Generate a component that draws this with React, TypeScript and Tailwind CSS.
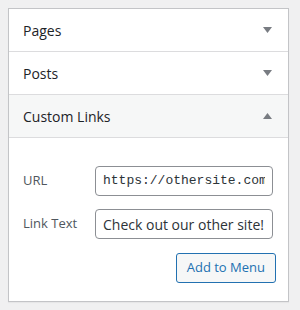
import React from "react";

const font = { fontFamily: '"Open Sans", "Noto Sans", sans-serif' };

function Arrow({ up = false }: { up?: boolean }) {
  return (
    <svg width="9" height="6" viewBox="0 0 9 6" className="block">
      {up ? (
        <polygon points="0,6 9,6 4.5,0" fill="#787c82" />
      ) : (
        <polygon points="0,0 9,0 4.5,6" fill="#787c82" />
      )}
    </svg>
  );
}

function Section({ title, open = false }: { title: string; open?: boolean }) {
  return (
    <div
      className={`h-[43px] flex items-center justify-between pl-[14px] pr-[16px] border-b border-[#dcdcde] ${
        open ? "bg-[#f6f7f7]" : "bg-white"
      }`}
    >
      <span className="text-[14px] text-[#1d2327]">{title}</span>
      <Arrow up={open} />
    </div>
  );
}

export default function App() {
  return (
    <div className="w-[300px] h-[310px] bg-[#f0f0f1] pt-2 pl-2" style={font}>
      <div className="w-[281px] bg-white border border-[#c3c4c7] shadow-[0_1px_1px_rgba(0,0,0,0.04)]">
        <Section title="Pages" />
        <Section title="Posts" />
        <Section title="Custom Links" open />
        <div className="pt-[28px] pb-[18px] pl-[14px] pr-[14px]">
          <div className="flex items-center h-[30px]">
            <label className="w-[72px] text-[13px] text-[#50575e]">URL</label>
            <div className="w-[178px] h-[30px] border border-[#8c8f94] rounded-[4px] px-[7px] flex items-center">
              <span
                className="block w-full overflow-hidden text-[13px] text-[#2c3338] whitespace-nowrap"
                style={{ fontFamily: '"Liberation Mono", monospace' }}
              >
                https://othersite.com
              </span>
            </div>
          </div>
          <div className="flex items-center h-[30px] mt-[13px]">
            <label className="w-[72px] text-[13px] text-[#50575e]">Link Text</label>
            <div className="w-[178px] h-[30px] border border-[#8c8f94] rounded-[4px] px-[7px] flex items-center">
              <span className="block w-full overflow-hidden text-[14px] text-[#2c3338] whitespace-nowrap">
                Check out our other site!
              </span>
            </div>
          </div>
          <div className="flex justify-end mt-[14px] -mr-[2px]">
            <button className="h-[30px] px-[10px] border border-[#2271b1] rounded-[3px] bg-[#f6f7f7] text-[13px] text-[#2271b1]">
              Add to Menu
            </button>
          </div>
        </div>
      </div>
    </div>
  );
}
